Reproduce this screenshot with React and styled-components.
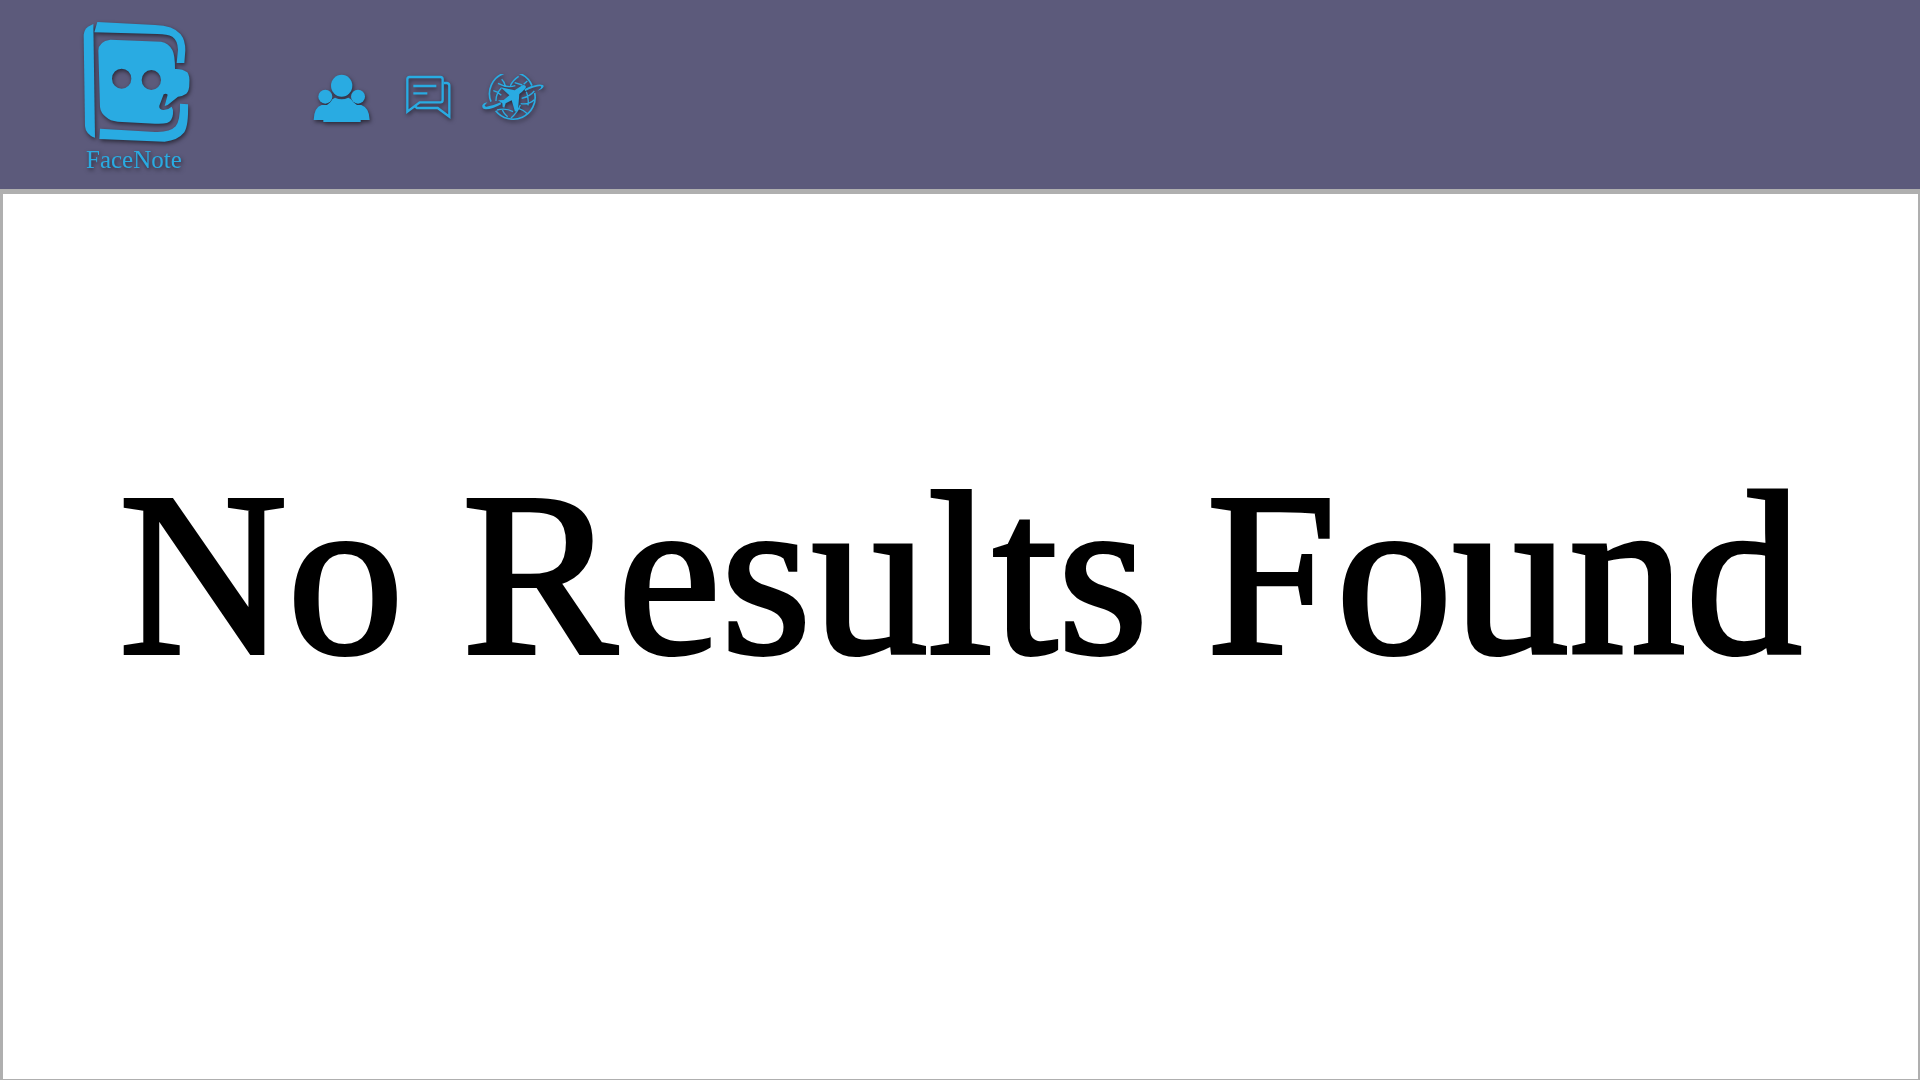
import React from "react";
import styled, { createGlobalStyle } from "styled-components";

const GlobalStyle = createGlobalStyle`
  *, *::before, *::after { box-sizing: border-box; }
  body { margin: 0; background: #ffffff; }
`;

const Page = styled.div`
  display: flex;
  flex-direction: column;
  min-height: 100vh;
  font-family: "Liberation Serif", "Times New Roman", serif;
`;

const Header = styled.header`
  display: flex;
  align-items: center;
  gap: 119px;
  padding: 18px 80px 12px;
  background: #5c5a7b;
  border-bottom: 2px solid #afafaf;
`;

const Brand = styled.a`
  display: flex;
  flex-direction: column;
  color: #29abe2;
  text-decoration: none;
  filter: drop-shadow(1px 2px 2px rgba(0, 0, 0, 0.55));
`;

const BrandName = styled.span`
  padding-left: 6px;
  font-size: 25px;
  line-height: 34px;
`;

const Nav = styled.nav`
  display: flex;
  align-items: center;
  gap: 28px;
  padding-top: 2px;
`;

const NavLink = styled.a`
  display: flex;
  color: #29abe2;
  filter: drop-shadow(1px 2px 2px rgba(0, 0, 0, 0.55));
`;

const Icon = styled.svg`
  display: block;
  width: ${(p) => p.$width}px;
  height: ${(p) => p.$height}px;
  fill: currentColor;
`;

const Main = styled.main`
  flex: 1;
  display: flex;
  justify-content: center;
  align-items: flex-start;
  padding: 252px 16px 0;
  border: solid #afafaf;
  border-width: 3px 2px 1px 3px;
`;

const Message = styled.h1`
  margin: 0;
  font-size: 233px;
  line-height: 256px;
  font-weight: 400;
  color: #000000;
  -webkit-text-stroke: 4px #000000;
  text-align: center;
`;

function LogoMark() {
  return (
    <Icon $width={114} $height={125} viewBox="30 24 342 375" aria-hidden="true">
      <path d="M41 75 Q43 57 54 50 L70 42 L75 383 Q68 382 62 377 L53 369 Q46 362 45 348 Z" />
      <path d="M82 36 L255 45 Q310 46 332 73 Q346 91 346 121 L343 159 H320 L324 119 Q323 91 307 80 Q292 73 262 72 L73 67 Z" />
      <path d="M90 356 L255 366 Q299 368 317 349 Q331 330 330 281 L354 283 Q356 345 343 367 Q323 392 284 395 L88 387 Z" />
      <path
        fillRule="evenodd"
        d="M121 89 L273 95 Q296 99 307 120 Q315 135 315 177 Q337 176 352 187 Q360 198 358 221 Q358 242 349 251 Q337 259 324 260 L293 285 L284 288 L293 254 Q288 249 281 253 L268 287 Q266 297 279 300 Q293 301 305 290 Q311 299 309 312 Q307 333 291 339 Q279 342 255 341 L143 335 Q120 333 108 321 Q92 309 90 291 L85 122 Q86 94 121 89 Z M155 176 A29 30 0 1 0 155 236 A29 30 0 1 0 155 176 Z M244 180 A29 30 0 1 0 244 240 A29 30 0 1 0 244 180 Z"
      />
    </Icon>
  );
}

function PeopleIcon() {
  return (
    <Icon $width={64} $height={50} viewBox="40 42 192 150" aria-hidden="true">
      <ellipse cx="126" cy="77" rx="32" ry="33" />
      <circle cx="77" cy="110" r="21" />
      <circle cx="175" cy="110" r="21" />
      <path d="M42 180 Q43 142 66 135 L82 135 Q94 128 98 118 L106 113 Q126 122 146 113 L154 118 Q160 128 172 135 L185 135 Q209 143 210 180 L183 180 V186 H71 V180 Z" />
    </Icon>
  );
}

function ChatIcon() {
  return (
    <Icon $width={48} $height={50} viewBox="32 42 144 150" aria-hidden="true">
      <g fill="none" stroke="currentColor" strokeWidth="7">
        <path d="M39 155 V58 Q39 51 46 51 H138 Q145 51 145 58 V119 Q145 127 138 127 H76 Z" />
        <path d="M148 69 H158 Q165 70 165 77 V170 L130 144 H68 L61 138" />
        <path d="M57 78 H126 M57 100 H99" />
      </g>
    </Icon>
  );
}

function TravelIcon() {
  return (
    <Icon $width={64} $height={50} viewBox="262 39 192 150" aria-hidden="true">
      <g fill="none" stroke="currentColor" strokeWidth="5">
        <path d="M292 122 A66 65 0 0 1 415 74 M423 96 A66 65 0 0 1 306 149" />
        <path strokeWidth="4" d="M313 67 Q340 82 365 74 M324 55 Q332 62 335 75 M375 46 Q358 57 350 74 M363 65 L386 72 M299 89 Q311 91 323 103 M323 81 Q306 99 307 120 M401 60 L390 70 M398 92 Q406 110 403 133 M384 112 Q408 107 422 90 M381 128 Q405 132 422 116 M310 147 Q337 140 358 152 M326 145 Q328 155 342 167 M380 132 Q371 155 352 171 M376 143 Q389 147 401 158" />
      </g>
      <path d="M321 79 L363 88 L386 73 Q394 70 397 77 Q397 83 377 99 L373 148 L364 152 L354 118 L336 127 L332 140 L327 138 L326 127 L313 118 L330 117 L347 103 Z" />
      <path d="M266 133 Q264 145 277 145 Q296 145 322 130 L321 124 Q298 135 278 137 Q271 137 274 132 L281 124 Q269 126 266 133 Z" />
      <path d="M394 91 Q422 76 440 75 Q444 76 442 80 L432 89 Q448 84 450 76 Q450 69 431 71 Q410 74 393 84 Z" />
    </Icon>
  );
}

export default function App() {
  return (
    <Page>
      <GlobalStyle />
      <Header>
        <Brand href="#home">
          <LogoMark />
          <BrandName>FaceNote</BrandName>
        </Brand>
        <Nav aria-label="Main">
          <NavLink href="#friends" aria-label="Friends">
            <PeopleIcon />
          </NavLink>
          <NavLink href="#messages" aria-label="Messages">
            <ChatIcon />
          </NavLink>
          <NavLink href="#travel" aria-label="Travel">
            <TravelIcon />
          </NavLink>
        </Nav>
      </Header>
      <Main>
        <Message>No Results Found</Message>
      </Main>
    </Page>
  );
}
